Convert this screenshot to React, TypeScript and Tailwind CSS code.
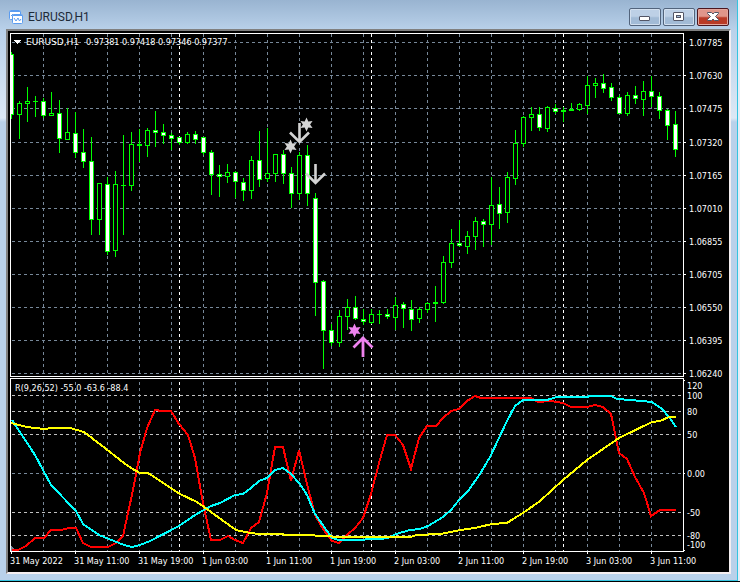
import React from 'react';

type CandleKind = 'up' | 'down' | 'flat';
type Candle = [high: number, low: number, top: number, bottom: number, kind: CandleKind];
type Point = [number, number];

const FIRST_X = 11;
const STEP = 8;

// One entry per hourly bar, in chart units
const candles: Candle[] = [
  [52, 119, 54, 115, 'down'],
  [101, 139, 103, 115, 'up'],
  [87, 122, 101, 104, 'up'],
  [96, 117, 101, 102, 'flat'],
  [98, 118, 101, 116, 'down'],
  [92, 116, 113, 116, 'up'],
  [100, 153, 113, 139, 'down'],
  [108, 140, 132, 140, 'up'],
  [112, 158, 133, 153, 'down'],
  [129, 168, 152, 162, 'down'],
  [137, 235, 161, 220, 'down'],
  [183, 235, 183, 220, 'up'],
  [177, 255, 184, 252, 'down'],
  [171, 257, 184, 251, 'up'],
  [135, 235, 185, 186, 'flat'],
  [132, 191, 144, 186, 'up'],
  [129, 162, 144, 146, 'flat'],
  [128, 157, 130, 146, 'up'],
  [111, 147, 130, 133, 'down'],
  [124, 144, 132, 136, 'down'],
  [133, 150, 135, 139, 'down'],
  [137, 145, 137, 143, 'down'],
  [132, 144, 134, 143, 'up'],
  [131, 144, 134, 140, 'down'],
  [137, 155, 137, 153, 'down'],
  [150, 195, 152, 175, 'down'],
  [165, 197, 174, 177, 'down'],
  [164, 183, 172, 177, 'up'],
  [171, 198, 172, 182, 'down'],
  [178, 201, 182, 191, 'down'],
  [156, 199, 160, 191, 'up'],
  [131, 187, 160, 180, 'down'],
  [128, 182, 173, 179, 'up'],
  [154, 182, 154, 174, 'up'],
  [150, 184, 154, 174, 'down'],
  [167, 208, 173, 194, 'down'],
  [152, 200, 155, 194, 'up'],
  [145, 206, 155, 194, 'down'],
  [193, 316, 198, 283, 'down'],
  [280, 369, 281, 331, 'down'],
  [324, 346, 330, 343, 'down'],
  [310, 347, 316, 343, 'up'],
  [299, 330, 307, 317, 'up'],
  [296, 320, 307, 319, 'down'],
  [309, 325, 319, 322, 'down'],
  [309, 324, 314, 323, 'up'],
  [310, 324, 314, 315, 'flat'],
  [309, 319, 314, 317, 'down'],
  [297, 330, 305, 318, 'up'],
  [302, 328, 304, 309, 'down'],
  [300, 331, 309, 320, 'down'],
  [307, 323, 309, 319, 'up'],
  [302, 313, 303, 310, 'up'],
  [286, 322, 302, 304, 'flat'],
  [256, 304, 262, 303, 'up'],
  [229, 268, 243, 263, 'up'],
  [220, 247, 243, 246, 'down'],
  [231, 254, 236, 247, 'up'],
  [217, 250, 221, 237, 'up'],
  [219, 247, 221, 225, 'down'],
  [177, 245, 205, 225, 'up'],
  [187, 229, 204, 214, 'down'],
  [172, 223, 177, 213, 'up'],
  [130, 185, 143, 179, 'up'],
  [116, 147, 117, 144, 'up'],
  [107, 131, 114, 118, 'up'],
  [107, 131, 114, 128, 'down'],
  [106, 132, 107, 129, 'up'],
  [104, 114, 108, 112, 'down'],
  [107, 122, 110, 112, 'flat'],
  [103, 111, 109, 111, 'flat'],
  [103, 111, 104, 110, 'up'],
  [76, 114, 85, 106, 'up'],
  [78, 98, 83, 86, 'up'],
  [74, 93, 83, 89, 'down'],
  [83, 101, 87, 98, 'down'],
  [95, 114, 97, 114, 'down'],
  [92, 116, 95, 114, 'up'],
  [86, 104, 95, 99, 'down'],
  [81, 116, 91, 100, 'up'],
  [76, 107, 91, 97, 'down'],
  [92, 119, 96, 111, 'down'],
  [109, 140, 110, 126, 'down'],
  [111, 157, 124, 150, 'down'],
];

const fastLine: Point[] = [
  [12, 550], [18, 550], [26, 546], [35, 538], [44, 538], [51, 530], [61, 530], [69, 528], [76, 528],
  [83, 543], [91, 547], [108, 547], [116, 543], [123, 536], [128, 513], [133, 490], [140, 453],
  [147, 428], [155, 410], [162, 411], [171, 411], [179, 424], [188, 435], [195, 458], [203, 503],
  [211, 540], [220, 540], [228, 536], [235, 540], [243, 543], [251, 528], [259, 522], [267, 493],
  [275, 447], [283, 447], [291, 481], [299, 450], [307, 484], [315, 515], [323, 529], [332, 541],
  [339, 543], [347, 535], [355, 528], [363, 518], [371, 494], [379, 463], [387, 435], [395, 435],
  [403, 445], [411, 469], [419, 438], [427, 426], [436, 426], [443, 418], [451, 411], [459, 409],
  [467, 401], [475, 396], [481, 398], [531, 398], [538, 402], [551, 401], [563, 403], [571, 407],
  [587, 407], [595, 405], [603, 407], [611, 414], [619, 453], [627, 459], [635, 477], [644, 493],
  [651, 516], [660, 510], [676, 510],
];

const midLine: Point[] = [
  [12, 420], [35, 455], [51, 485], [76, 511], [83, 524], [99, 535], [124, 545], [132, 547],
  [140, 545], [150, 541], [179, 526], [195, 515], [211, 506], [220, 503], [235, 495], [243, 494],
  [251, 488], [259, 481], [267, 478], [275, 470], [283, 468], [291, 474], [300, 484], [307, 495],
  [315, 514], [332, 538], [339, 540], [363, 540], [367, 539], [379, 539], [388, 538], [396, 534],
  [410, 530], [420, 529], [428, 526], [443, 517], [451, 510], [459, 500], [468, 491], [480, 474],
  [490, 457], [499, 438], [507, 421], [515, 406], [523, 400], [547, 400], [557, 397], [587, 397],
  [590, 396], [611, 396], [617, 399], [630, 400], [652, 402], [662, 409], [669, 417], [676, 427],
];

const slowLine: Point[] = [
  [11, 423], [27, 427], [44, 429], [52, 428], [70, 428], [84, 432], [101, 445], [124, 463],
  [131, 468], [140, 473], [148, 473], [180, 494], [197, 502], [236, 530], [245, 532], [258, 534],
  [282, 534], [285, 535], [313, 535], [317, 536], [330, 536], [334, 537], [410, 537], [417, 535],
  [440, 534], [451, 532], [460, 530], [475, 528], [492, 524], [507, 523], [513, 519], [523, 513],
  [540, 501], [563, 480], [587, 460], [603, 449], [619, 438], [652, 422], [660, 421], [669, 417],
  [676, 417],
];

const prices = [
  '1.07785', '1.07630', '1.07475', '1.07320', '1.07165', '1.07010',
  '1.06855', '1.06705', '1.06550', '1.06395', '1.06240',
];
const priceY = [42, 75, 108, 142, 175, 208, 241, 274, 307, 340, 373];

const levels = [
  { y: 395, color: '#c0c0c0' },
  { y: 411, color: '#c0c0c0' },
  { y: 434, color: '#c0c0c0' },
  { y: 473, color: '#778899' },
  { y: 512, color: '#c0c0c0' },
  { y: 535, color: '#c0c0c0' },
];

const levelLabels = [
  { text: '120', y: 389 },
  { text: '100', y: 399 },
  { text: '80', y: 415 },
  { text: '50', y: 438 },
  { text: '0.00', y: 477 },
  { text: '-50', y: 516 },
  { text: '-80', y: 539 },
  { text: '-100', y: 548 },
];

const times = [
  '31 May 2022', '31 May 11:00', '31 May 19:00', '1 Jun 03:00', '1 Jun 11:00', '1 Jun 19:00',
  '2 Jun 03:00', '2 Jun 11:00', '2 Jun 19:00', '3 Jun 03:00', '3 Jun 11:00',
];

const gridX = Array.from({ length: 20 }, (_, i) => 43 + i * 32);
const dayX = [179, 371, 563];

function CandleBar({ x, candle }: { x: number; candle: Candle }) {
  const [high, low, top, bottom, kind] = candle;
  return (
    <g fill="#00ff00">
      <rect x={x} y={high} width={1} height={low - high} />
      <rect x={x - 2} y={top} width={5} height={bottom - top} />
      {kind !== 'flat' && (
        <rect
          x={x - 1}
          y={top + 1}
          width={3}
          height={bottom - top - 2}
          fill={kind === 'down' ? '#ffffff' : '#000000'}
        />
      )}
    </g>
  );
}

function Star({ x, y, color }: { x: number; y: number; color: string }) {
  const points = Array.from({ length: 12 }, (_, i) => {
    const r = i % 2 === 0 ? 7 : 3.6;
    const a = (Math.PI / 6) * i - Math.PI / 2;
    return `${x + r * Math.cos(a)},${y + r * Math.sin(a)}`;
  });
  return <polygon points={points.join(' ')} fill={color} />;
}

function DownArrow({ x, y }: { x: number; y: number }) {
  return (
    <path
      d={`M${x} ${y - 21}V${y - 2}M${x - 9.5} ${y - 11.5}L${x} ${y - 2}L${x + 9.5} ${y - 11.5}`}
      fill="none"
      stroke="#d3d3d3"
      strokeWidth={2.6}
    />
  );
}

function Chart() {
  return (
    <svg
      viewBox="8 31 721 541"
      className="block h-auto w-full bg-black font-['DejaVu_Sans_Condensed','DejaVu_Sans',sans-serif] text-[9px]"
      role="img"
      aria-label="EURUSD,H1"
    >
      <g shapeRendering="crispEdges">
        {/* grid */}
        <g stroke="#778899" strokeDasharray="3 3">
          {priceY.map((y) => (
            <line key={y} x1={12} x2={683} y1={y + 0.5} y2={y + 0.5} />
          ))}
          {gridX.map((x) => (
            <line key={x} x1={x + 0.5} x2={x + 0.5} y1={34} y2={551} />
          ))}
        </g>
        <g strokeDasharray="3 3">
          {levels.map((l) => (
            <line key={l.y} x1={12} x2={683} y1={l.y + 0.5} y2={l.y + 0.5} stroke={l.color} />
          ))}
          {dayX.map((x) => (
            <line key={x} x1={x + 0.5} x2={x + 0.5} y1={34} y2={551} stroke="#ffffff" />
          ))}
        </g>

        {candles.map((c, i) => (
          <CandleBar key={i} x={FIRST_X + i * STEP} candle={c} />
        ))}

        {/* oscillator */}
        <path d="M11 546L16 551H11Z" fill="#778899" />
        <g fill="none" strokeWidth={2}>
          <polyline points={fastLine.join(' ')} stroke="#ff0000" />
          <polyline points={midLine.join(' ')} stroke="#00ffff" />
          <polyline points={slowLine.join(' ')} stroke="#ffff00" />
        </g>

        {/* panel frames and axis ticks */}
        <rect x={8} y={34} width={2} height={518} fill="#000000" />
        <rect x={10} y={377} width={674} height={1} fill="#000000" />
        <g fill="none" stroke="#ffffff">
          <rect x={10.5} y={33.5} width={673} height={343} />
          <rect x={10.5} y={378.5} width={673} height={173} />
          {priceY.map((y) => (
            <path key={y} d={`M684 ${y + 0.5}h2`} />
          ))}
          <path d="M684 380.5h1M684 473.5h1M684 550.5h1" />
          {times.map((t, i) => (
            <path key={t} d={`M${FIRST_X + i * 64 + 0.5} 552v2`} />
          ))}
        </g>
        <path d="M14 40H21V41H20V42H19V43H18V44H17V43H16V42H15V41H14Z" fill="#ffffff" />
      </g>

      {/* signals */}
      <Star x={306.5} y={124.5} color="#d3d3d3" />
      <Star x={290.5} y={146.5} color="#d3d3d3" />
      <DownArrow x={299.5} y={144} />
      <DownArrow x={315.5} y={185} />
      <Star x={354.5} y={330.5} color="#ee82ee" />
      <path
        d="M363 357V337M353.5 347.500L363 338L372.500 347.500"
        fill="none"
        stroke="#ee82ee"
        strokeWidth={2.8}
      />

      <g fill="#ffffff">
        <text x={26} y={45} className="font-['DejaVu_Sans',sans-serif]">EURUSD,H1</text>
        <text x={86} y={45}>0.97381 0.97418 0.97346 0.97377</text>
        <text x={15} y={391}>R(9,26,52) -55.0 -63.6 -88.4</text>
        {prices.map((p, i) => (
          <text key={p} x={689} y={priceY[i] + 4}>{p}</text>
        ))}
        {levelLabels.map((l) => (
          <text key={l.text} x={687} y={l.y}>{l.text}</text>
        ))}
        {times.map((t, i) => (
          <text key={t} x={10 + i * 64} y={564}>{t}</text>
        ))}
      </g>
    </svg>
  );
}

function ChartIcon() {
  return (
    <svg width="14" height="14" viewBox="0 0 14 14" fill="none" aria-hidden="true">
      <rect x="0.5" y="0.5" width="11" height="9" rx="1" fill="#fff" stroke="#5b9cf0" />
      <path d="M1 1.5H11" stroke="#5b9cf0" />
      <path d="M2 6L4 4L5 6L7 4.500" stroke="#5b9cf0" />
      <rect x="3.500" y="4.500" width="10" height="9" rx="1" fill="#fff" stroke="#5b9cf0" />
      <path d="M4 5.500H13" stroke="#5b9cf0" />
      <path d="M5 8L7 11L9 8L10.500 11L12 9" stroke="#5b9cf0" />
    </svg>
  );
}

const captionButton =
  'flex h-[18px] w-8 items-center justify-center rounded-xs border border-[#52647c] bg-linear-to-b from-[#bdd0e6] from-45% to-[#a2bbd6] to-55% shadow-[inset_0_0_0_1px_#d3e0ef]';

const closeButton =
  'flex h-[18px] w-8 items-center justify-center rounded-xs border border-[#4b1720] bg-linear-to-b from-[#e0968a] from-45% to-[#b93a26] to-55% shadow-[inset_0_0_0_1px_#e3a79e]';

function TitleBar() {
  return (
    <header className="flex h-[29px] items-start pr-[2px] pl-[3px]">
      <div className="flex flex-1 items-center gap-[5px] pt-2">
        <ChartIcon />
        <h1 className="font-['Roboto',sans-serif] text-xs leading-[18px] text-[#1e2a38]">EURUSD,H1</h1>
      </div>
      <div className="flex gap-[2px] pt-2">
        <button type="button" aria-label="Minimize" className={captionButton}>
          <svg width="12" height="12" viewBox="0 0 12 12" aria-hidden="true">
            <rect x="0.5" y="5.500" width="10" height="4" rx="0.500" fill="#fff" stroke="#535666" />
          </svg>
        </button>
        <button type="button" aria-label="Maximize" className={captionButton}>
          <svg width="12" height="12" viewBox="0 0 12 12" aria-hidden="true">
            <rect x="0.5" y="1.5" width="10" height="8" rx="0.500" fill="#fff" stroke="#535666" />
            <rect x="3.5" y="4.500" width="4" height="2" fill="#a9c0da" stroke="#535666" />
          </svg>
        </button>
        <button type="button" aria-label="Close" className={closeButton}>
          <svg width="12" height="12" viewBox="0 0 12 12" aria-hidden="true">
            <path d="M0.5 1.5H4.5L6 3L7.500 1.5H11.500V2.500L8.500 5.500L11.500 8.500V9.500H7.500L6 8L4.500 9.500H0.500V8.500L3.500 5.500L0.500 2.500Z" fill="#fff" stroke="#535666" />
          </svg>
        </button>
      </div>
    </header>
  );
}

export default function App() {
  return (
    <div className="w-full border-b border-black bg-[#e6eef7] pr-[2px]">
      <main className="border-r border-b border-[#35c4e0] bg-linear-to-b from-[#99b4d1] from-0% via-[#b9d1ea] via-[30px] to-[#dce8f5] to-[118px]">
        <div className="bg-[linear-gradient(to_bottom,transparent_118px,#b9d1ea_122px)] px-[6px] pb-[6px]">
          <TitleBar />
          <div className="border-2 border-t-[#808080] border-r-[#f4eef0] border-b-[#f4eef0] border-l-[#808080]">
            <Chart />
          </div>
        </div>
      </main>
    </div>
  );
}
